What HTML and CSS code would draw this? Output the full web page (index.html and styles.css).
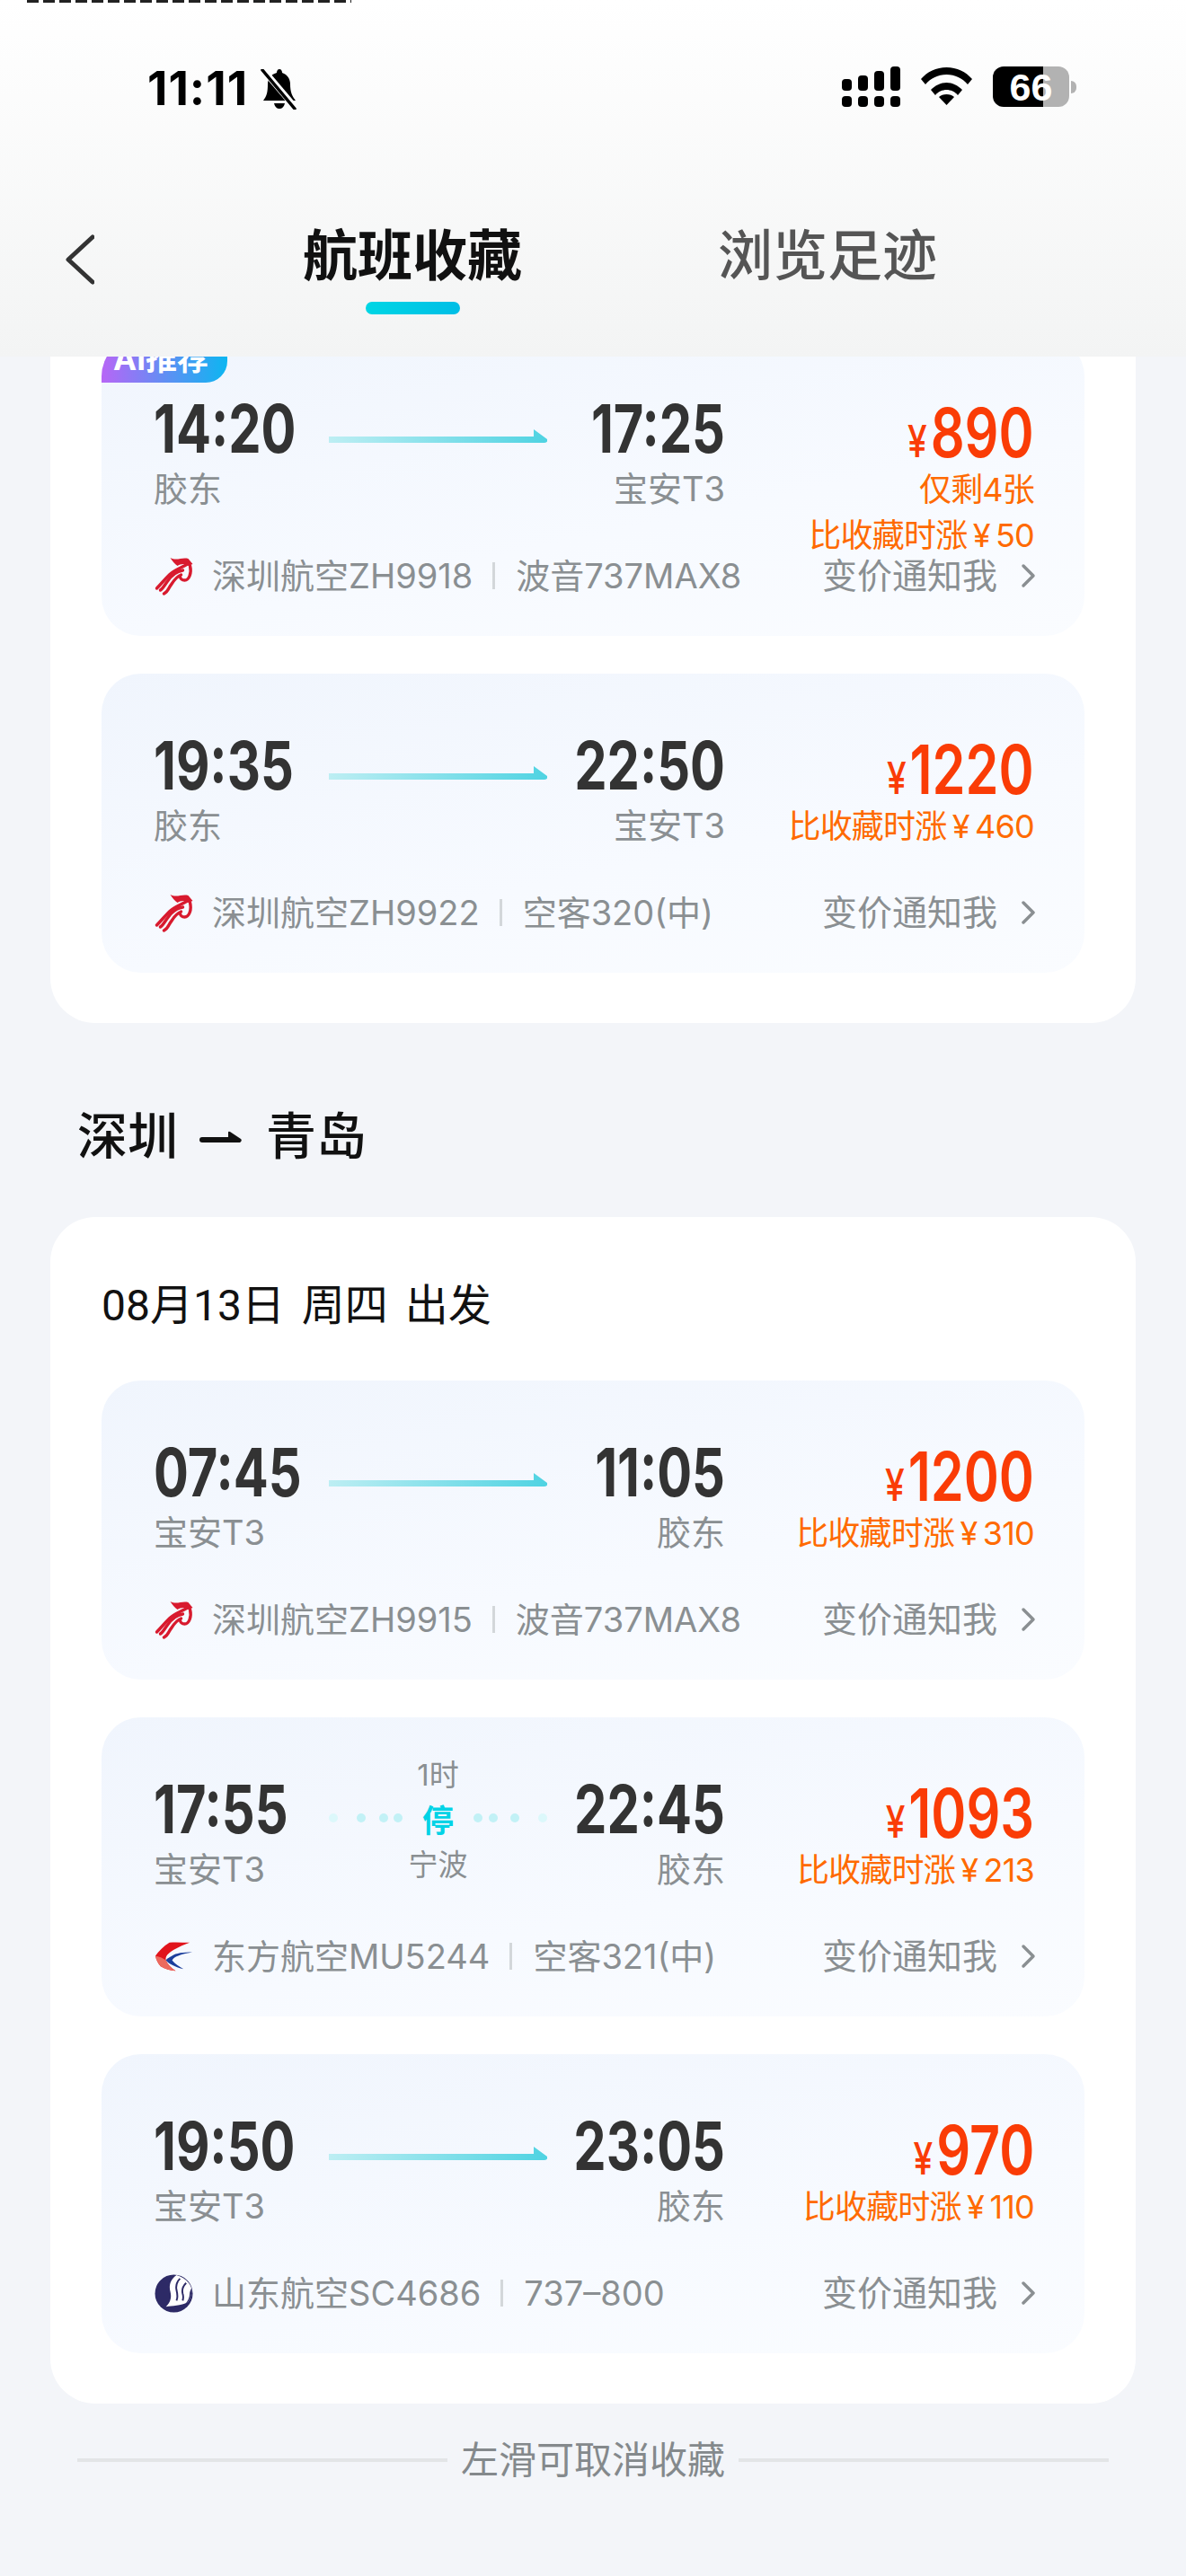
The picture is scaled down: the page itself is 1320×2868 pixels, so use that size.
FILE: index.html
```html
<!DOCTYPE html>
<html lang="zh-CN">
<head>
  <meta charset="UTF-8" />
  <meta name="viewport" content="width=device-width, initial-scale=1" />
  <title>航班收藏</title>
  <link rel="stylesheet" href="styles.css">
</head>
<body>

  <header class="top">
    <div class="cut-line"></div>
    <div class="status">
      <div class="status-left">
        <span class="clock">11:11</span>
        <svg class="bell" viewBox="0 0 42 45">
          <path d="M21 0c2 0 3 2 3 4 6 2 9 7 9 13 0 8 2 13 6 18H3c4-5 5-10 5-18 0-6 3-11 10-13 0-2 1-4 3-4z" fill="#000"/>
          <path d="M15 38h12c-1 4-3 6-6 6s-5-2-6-6z" fill="#000"/>
          <path d="M4 2l34 40" stroke="#fff" stroke-width="7"/>
          <path d="M2 1l36 43" stroke="#000" stroke-width="3.5" stroke-linecap="round"/>
        </svg>
      </div>
      <div class="status-right">
        <svg class="signal" viewBox="0 0 65 45">
          <rect x="0" y="14" width="11" height="13" rx="4"/>
          <rect x="18" y="10" width="11" height="17" rx="4"/>
          <rect x="36" y="5" width="11" height="22" rx="4"/>
          <rect x="54" y="0" width="11" height="27" rx="4"/>
          <rect x="0" y="33" width="11" height="12" rx="4"/>
          <rect x="18" y="33" width="11" height="12" rx="4"/>
          <rect x="36" y="33" width="11" height="12" rx="4"/>
          <rect x="54" y="33" width="11" height="12" rx="4"/>
        </svg>
        <svg class="wifi" viewBox="0 0 57 42">
          <path d="M0 13C7 5 17 0 28.500 0S50 5 57 13l-5 6C46 12 38 8 28.500 8S11 12 5 19z"/>
          <path d="M11 25c5-5 11-8 17.500-8S41 20 46 25l-5 6c-3-4-8-6-12.500-6S19 27 16 31z"/>
          <path d="M20 33c2-2 5-3 8.500-3s6.500 1 8.500 3l-8.500 9z"/>
        </svg>
        <div class="battery">
          <div class="battery-body"><span>66</span></div>
          <div class="battery-nub"></div>
        </div>
      </div>
    </div>
    <nav class="tabs">
      <svg class="back" viewBox="0 0 32 56"><path d="M30 3L3 28l27 25" /></svg>
      <a class="tab tab-on" href="#">航班收藏</a>
      <a class="tab" href="#">浏览足迹</a>
    </nav>
  </header>

  <main class="list">
    <section class="panel panel-first">
      <div class="card">
        <div class="ai-tag">AI推荐</div>
        <div class="card-main">
          <div class="dep">
            <div class="time">14:20</div>
            <div class="place">胶东</div>
          </div>
          <svg class="arrow" viewBox="0 0 243 15"><path d="M0 8h228V0l15 11q1 4-3 4H0z" fill="url(#lineFill)"/></svg>
          <div class="arr">
            <div class="time">17:25</div>
            <div class="place">宝安T3</div>
          </div>
          <div class="fare">
            <div class="price"><span class="yen">¥</span>890</div>
            <div class="note">仅剩4张</div>
            <div class="note">比收藏时涨 ¥ 50</div>
          </div>
        </div>
        <div class="card-foot">
          <svg class="logo" viewBox="0 0 42 43"><use href="#logoSz"/></svg>
          <span class="flight">深圳航空ZH9918</span>
          <i class="sep"></i>
          <span class="flight">波音737MAX8</span>
          <span class="notify">变价通知我</span>
          <svg class="more" viewBox="0 0 18 28"><path d="M3 3l11 11L3 25"/></svg>
        </div>
      </div>

      <div class="card">
        <div class="card-main">
          <div class="dep">
            <div class="time">19:35</div>
            <div class="place">胶东</div>
          </div>
          <svg class="arrow" viewBox="0 0 243 15"><path d="M0 8h228V0l15 11q1 4-3 4H0z" fill="url(#lineFill)"/></svg>
          <div class="arr">
            <div class="time">22:50</div>
            <div class="place">宝安T3</div>
          </div>
          <div class="fare">
            <div class="price"><span class="yen">¥</span>1220</div>
            <div class="note">比收藏时涨 ¥ 460</div>
          </div>
        </div>
        <div class="card-foot">
          <svg class="logo" viewBox="0 0 42 43"><use href="#logoSz"/></svg>
          <span class="flight">深圳航空ZH9922</span>
          <i class="sep"></i>
          <span class="flight">空客320(中)</span>
          <span class="notify">变价通知我</span>
          <svg class="more" viewBox="0 0 18 28"><path d="M3 3l11 11L3 25"/></svg>
        </div>
      </div>
    </section>

    <h2 class="route">
      <span>深圳</span>
      <svg class="route-arrow" viewBox="0 0 47 13"><path d="M3 7h29V2q0-2 2-1l12 8q2 2-1 4H3a3 3 0 0 1 0-6z"/></svg>
      <span>青岛</span>
    </h2>

    <section class="panel">
      <div class="date">08月13日 周四 出发</div>

      <div class="card">
        <div class="card-main">
          <div class="dep">
            <div class="time">07:45</div>
            <div class="place">宝安T3</div>
          </div>
          <svg class="arrow" viewBox="0 0 243 15"><path d="M0 8h228V0l15 11q1 4-3 4H0z" fill="url(#lineFill)"/></svg>
          <div class="arr">
            <div class="time">11:05</div>
            <div class="place">胶东</div>
          </div>
          <div class="fare">
            <div class="price"><span class="yen">¥</span>1200</div>
            <div class="note">比收藏时涨 ¥ 310</div>
          </div>
        </div>
        <div class="card-foot">
          <svg class="logo" viewBox="0 0 42 43"><use href="#logoSz"/></svg>
          <span class="flight">深圳航空ZH9915</span>
          <i class="sep"></i>
          <span class="flight">波音737MAX8</span>
          <span class="notify">变价通知我</span>
          <svg class="more" viewBox="0 0 18 28"><path d="M3 3l11 11L3 25"/></svg>
        </div>
      </div>

      <div class="card">
        <div class="card-main">
          <div class="dep">
            <div class="time">17:55</div>
            <div class="place">宝安T3</div>
          </div>
          <div class="stop">
            <div class="stop-time">1时</div>
            <div class="stop-mid">
              <svg class="dots" viewBox="0 0 88 10">
                <circle cx="5" cy="5" r="5" fill="#dcf8fb"/>
                <circle cx="36" cy="5" r="5" fill="#c2f1f6"/>
                <circle cx="61" cy="5" r="5" fill="#c2f1f6"/>
                <circle cx="77" cy="5" r="5" fill="#c2f1f6"/>
              </svg>
              <span class="stop-word">停</span>
              <svg class="dots" viewBox="0 0 88 10">
                <circle cx="11" cy="5" r="5" fill="#c2f1f6"/>
                <circle cx="28" cy="5" r="5" fill="#c2f1f6"/>
                <circle cx="52" cy="5" r="5" fill="#c2f1f6"/>
                <circle cx="83" cy="5" r="5" fill="#dcf8fb"/>
              </svg>
            </div>
            <div class="stop-city">宁波</div>
          </div>
          <div class="arr">
            <div class="time">22:45</div>
            <div class="place">胶东</div>
          </div>
          <div class="fare">
            <div class="price"><span class="yen">¥</span>1093</div>
            <div class="note">比收藏时涨 ¥ 213</div>
          </div>
        </div>
        <div class="card-foot">
          <svg class="logo" viewBox="0 0 44 34">
            <path d="M40 1C32 1 24 0 17 1 10 5 5 11 1 16c1 5 3 9 6 12 5 3 11 5 17 5-5-3-9-7-11-12-1-4 2-8 9-12 6-3 12-6 18-8z" fill="#e1141c"/>
            <path d="M1 16c1 5 3 9 6 12 5 3 11 5 17 5-5-3-9-7-11-12-3-2-7-4-12-5z" fill="#ec6a5e"/>
            <path d="M43 12C33 12 24 13 20 16c-3 2-6 3-7 5 3 4 11 8 20 10-5-3-10-6-13-10 2-3 4-4 7-5 5-2 11-3 16-4z" fill="#1c3f9c"/>
          </svg>
          <span class="flight">东方航空MU5244</span>
          <i class="sep"></i>
          <span class="flight">空客321(中)</span>
          <span class="notify">变价通知我</span>
          <svg class="more" viewBox="0 0 18 28"><path d="M3 3l11 11L3 25"/></svg>
        </div>
      </div>

      <div class="card">
        <div class="card-main">
          <div class="dep">
            <div class="time">19:50</div>
            <div class="place">宝安T3</div>
          </div>
          <svg class="arrow" viewBox="0 0 243 15"><path d="M0 8h228V0l15 11q1 4-3 4H0z" fill="url(#lineFill)"/></svg>
          <div class="arr">
            <div class="time">23:05</div>
            <div class="place">胶东</div>
          </div>
          <div class="fare">
            <div class="price"><span class="yen">¥</span>970</div>
            <div class="note">比收藏时涨 ¥ 110</div>
          </div>
        </div>
        <div class="card-foot">
          <svg class="logo" viewBox="0 0 44 44">
            <circle cx="22" cy="22" r="21.500" fill="#2d2a66"/>
            <path d="M25 1C18 6 16 13 18 20c2 8-1 13-5 17 7-1 17-1 25-5 3-4 5-12 4-16C40 9 33 3 25 1z" fill="#fff"/>
            <path d="M29 5c-4 4-5 8-4 13 1 4 2 8 0 12M36 10c-4 4-5 8-4 12 1 3 1 5 0 8" fill="none" stroke="#2d2a66" stroke-width="2"/>
            <path d="M42 16c1 4-1 12-4 16-1 1-2 2-3 2 3-4 5-7 5-12 0-2 1-4 2-6z" fill="#2d2a66"/>
          </svg>
          <span class="flight">山东航空SC4686</span>
          <i class="sep"></i>
          <span class="flight">737–800</span>
          <span class="notify">变价通知我</span>
          <svg class="more" viewBox="0 0 18 28"><path d="M3 3l11 11L3 25"/></svg>
        </div>
      </div>
    </section>

    <div class="hint">
      <i class="hint-line"></i>
      <span>左滑可取消收藏</span>
      <i class="hint-line"></i>
    </div>
  </main>

  <!-- shared bits for the cards -->
  <svg class="defs" width="0" height="0">
    <defs>
      <linearGradient id="lineFill" x1="0" x2="1" y1="0" y2="0">
        <stop offset="0" stop-color="#bdeef3"/>
        <stop offset="1" stop-color="#4fd3e2"/>
      </linearGradient>
      <g id="logoSz">
        <path d="M17 1c7 4 13-1 20 1l5 6-5 2c-3-3-9-2-12 0-3-2-6-6-8-9z" fill="#d81a2e"/>
        <g fill="none" stroke="#d81a2e" stroke-width="3.400" stroke-linecap="round">
          <path d="M36 8C30 12 22 14 16 20 10 26 6 31 2 35"/>
          <path d="M39 10c2 8-1 16-6 16-3 0-5-2-5-4"/>
          <path d="M31 15c-7 1-13 6-17 12-3 4-5 8-8 10"/>
          <path d="M29 20c-6 2-9 8-13 14-2 4-4 6-6 7"/>
        </g>
      </g>
    </defs>
  </svg>

</body>
</html>
```

FILE: styles.css
```css
* {
  box-sizing: border-box;
}
html, body {
  margin: 0;
  padding: 0;
}
body {
  width: 1320px;
  height: 2868px;
  overflow: hidden;
  background: #f3f5f9;
  font-family: Inter, "Noto Sans CJK SC", sans-serif;
  color: #111;
}

/* header + status bar */
.top {
  position: relative;
  z-index: 2;
  height: 397px;
  background: linear-gradient(180deg, #ffffff 0%, #f3f4f4 100%);
}
/* bottom edge of a line cut off by the top of the screenshot */
.cut-line {
  width: 361px;
  height: 3px;
  margin-left: 30px;
  background: repeating-linear-gradient(90deg, #222 0 13px, transparent 13px 18px);
}
.status {
  display: flex;
  justify-content: space-between;
  align-items: flex-start;
  padding: 71px 122px 0 164px;
  height: 237px;
}
.status-left {
  display: flex;
  align-items: center;
  gap: 14px;
}
.clock {
  font-family: Inter, sans-serif;
  font-size: 52px;
  line-height: 50px;
  font-weight: 700;
  letter-spacing: 1px;
  color: #000;
}
.bell {
  width: 42px;
  height: 45px;
}
.status-right {
  display: flex;
  align-items: flex-start;
}
.signal {
  width: 65px;
  height: 45px;
  fill: #000;
}
.wifi {
  width: 57px;
  height: 42px;
  margin: 1px 23px 0 23px;
  fill: #000;
}
.battery {
  display: flex;
  align-items: center;
}
.battery-body {
  width: 85px;
  height: 45px;
  border-radius: 12px;
  background: linear-gradient(90deg, #000 66%, #b2b2b2 66%);
  color: #fff;
  font-family: "Liberation Sans", sans-serif;
  font-size: 43px;
  font-weight: 700;
  line-height: 46px;
  text-align: center;
}
.battery-nub {
  width: 6px;
  height: 14px;
  margin-left: 2px;
  border-radius: 0 7px 7px 0;
  background: #b2b2b2;
}
.tabs {
  display: flex;
  align-items: flex-start;
  padding-top: 3px;
}
.back {
  width: 32px;
  height: 56px;
  margin: 18px 0 0 73px;
  fill: none;
  stroke: #333;
  stroke-width: 5;
  stroke-linecap: round;
  stroke-linejoin: round;
}
.tab {
  position: relative;
  margin-left: 218px;
  color: #555;
  font-size: 61px;
  line-height: 84px;
  font-weight: 500;
  text-decoration: none;
}
.tab-on {
  margin-left: 232px;
  color: #111;
  font-weight: 700;
}
.tab-on::after {
  content: "";
  position: absolute;
  left: 70px;
  top: 93px;
  width: 105px;
  height: 14px;
  border-radius: 7px;
  background: linear-gradient(90deg, #00d6e4, #00bee6);
}

/* scrolled list */
.list {
  padding: 0 56px;
}
.panel {
  background: #fff;
  border-radius: 50px;
  padding: 63px 57px 56px;
}
.panel-first {
  margin-top: -85px;
  padding-top: 63px;
  border-radius: 0 0 50px 50px;
}
.route {
  display: flex;
  align-items: center;
  margin: 0;
  padding: 92px 0 56px 30px;
  height: 216px;
  font-size: 56px;
  line-height: 68px;
  font-weight: 500;
  color: #111;
}
.route-arrow {
  width: 47px;
  height: 13px;
  margin: 0 27px 0 24px;
  fill: #111;
}
.date {
  font-family: Roboto, "Noto Sans CJK SC", sans-serif;
  font-size: 48px;
  line-height: 72px;
  margin-bottom: 47px;
  word-spacing: 7px;
}

/* flight card */
.card {
  position: relative;
  height: 333px;
  margin-top: 42px;
  padding: 72px 58px 0;
  border-radius: 44px;
  background: linear-gradient(168deg, #f0f5fd 0%, #f7faff 60%, #fafcff 100%);
}
.panel-first .card:first-child,
.date + .card {
  margin-top: 0;
}
.ai-tag {
  position: absolute;
  left: 0;
  top: 0;
  width: 140px;
  height: 51px;
  padding-left: 13px;
  border-radius: 44px 0 24px 0;
  background: linear-gradient(90deg, #b766f6, #0cb6f1);
  color: #fff;
  font-size: 35px;
  line-height: 49px;
  font-weight: 700;
  white-space: nowrap;
}
.card-main {
  display: flex;
  align-items: flex-start;
  height: 170px;
}
.dep {
  width: 195px;
  flex: none;
}
.arr {
  width: 198px;
  flex: none;
  text-align: right;
}
/* no condensed face installed, so the wide digits get squeezed */
.time {
  display: flex;
  white-space: nowrap;
  font-family: Inter, sans-serif;
  font-size: 74px;
  line-height: 60px;
  font-weight: 700;
  color: #333;
  transform: scaleX(0.78);
  transform-origin: left center;
}
.arr .time {
  justify-content: flex-end;
  transform-origin: right center;
}
.place {
  margin-top: 15px;
  font-size: 38px;
  line-height: 44px;
  color: #8a8f92;
}
.arrow {
  width: 243px;
  height: 15px;
  flex: none;
  margin-top: 31px;
}
.fare {
  margin-left: auto;
  margin-right: -2px;
  text-align: right;
  white-space: nowrap;
}
.price {
  margin-top: 4px;
  font-family: Inter, sans-serif;
  font-size: 76px;
  line-height: 60px;
  font-weight: 600;
  color: #fa3c06;
  transform: scaleX(0.78);
  transform-origin: right center;
}
.yen {
  margin-right: 5px;
  font-size: 50px;
  font-weight: 500;
}
.note {
  font-family: Inter, "Noto Sans CJK SC", sans-serif;
  font-size: 36px;
  line-height: 51px;
  letter-spacing: -0.8px;
  word-spacing: -3px;
  color: #ff6a00;
}
.price + .note {
  margin-top: -1px;
}
.card-foot {
  display: flex;
  align-items: center;
  height: 44px;
  margin-top: 2px;
  white-space: nowrap;
}
.logo {
  width: 43px;
  height: 43px;
  flex: none;
  margin: 0 21px 0 1px;
}
.flight {
  font-size: 38px;
  line-height: 44px;
  color: #8a8f92;
}
.sep {
  width: 3px;
  height: 30px;
  margin: 0 23px 0 22px;
  background: #d3d7da;
}
.notify {
  margin-left: auto;
  font-size: 39px;
  line-height: 44px;
  color: #8a8f92;
}
.more {
  width: 18px;
  height: 28px;
  margin-left: 26px;
  margin-right: -5px;
  fill: none;
  stroke: #8a8f92;
  stroke-width: 3.500;
  stroke-linecap: round;
  stroke-linejoin: round;
}

/* one stop flights */
.stop {
  width: 243px;
  flex: none;
  margin-top: -30px;
  text-align: center;
  color: #8a8f92;
}
.stop-time,
.stop-city {
  font-size: 33px;
  line-height: 44px;
}
.stop-city {
  margin-top: 8px;
}
.stop-mid {
  display: flex;
  align-items: center;
  justify-content: space-between;
  height: 44px;
  margin-top: 4px;
}
.stop-word {
  font-size: 35px;
  font-weight: 700;
  color: #00d3e6;
}
.dots {
  width: 88px;
  height: 10px;
}

/* bottom hint */
.hint {
  display: flex;
  align-items: center;
  padding: 37px 30px 0;
  color: #84898c;
  font-size: 42px;
  line-height: 52px;
  white-space: nowrap;
}
.hint span {
  margin: 0 15px;
}
.hint-line {
  flex: 1;
  height: 4px;
  background: #e3e5e7;
}
.defs {
  position: absolute;
}
```
